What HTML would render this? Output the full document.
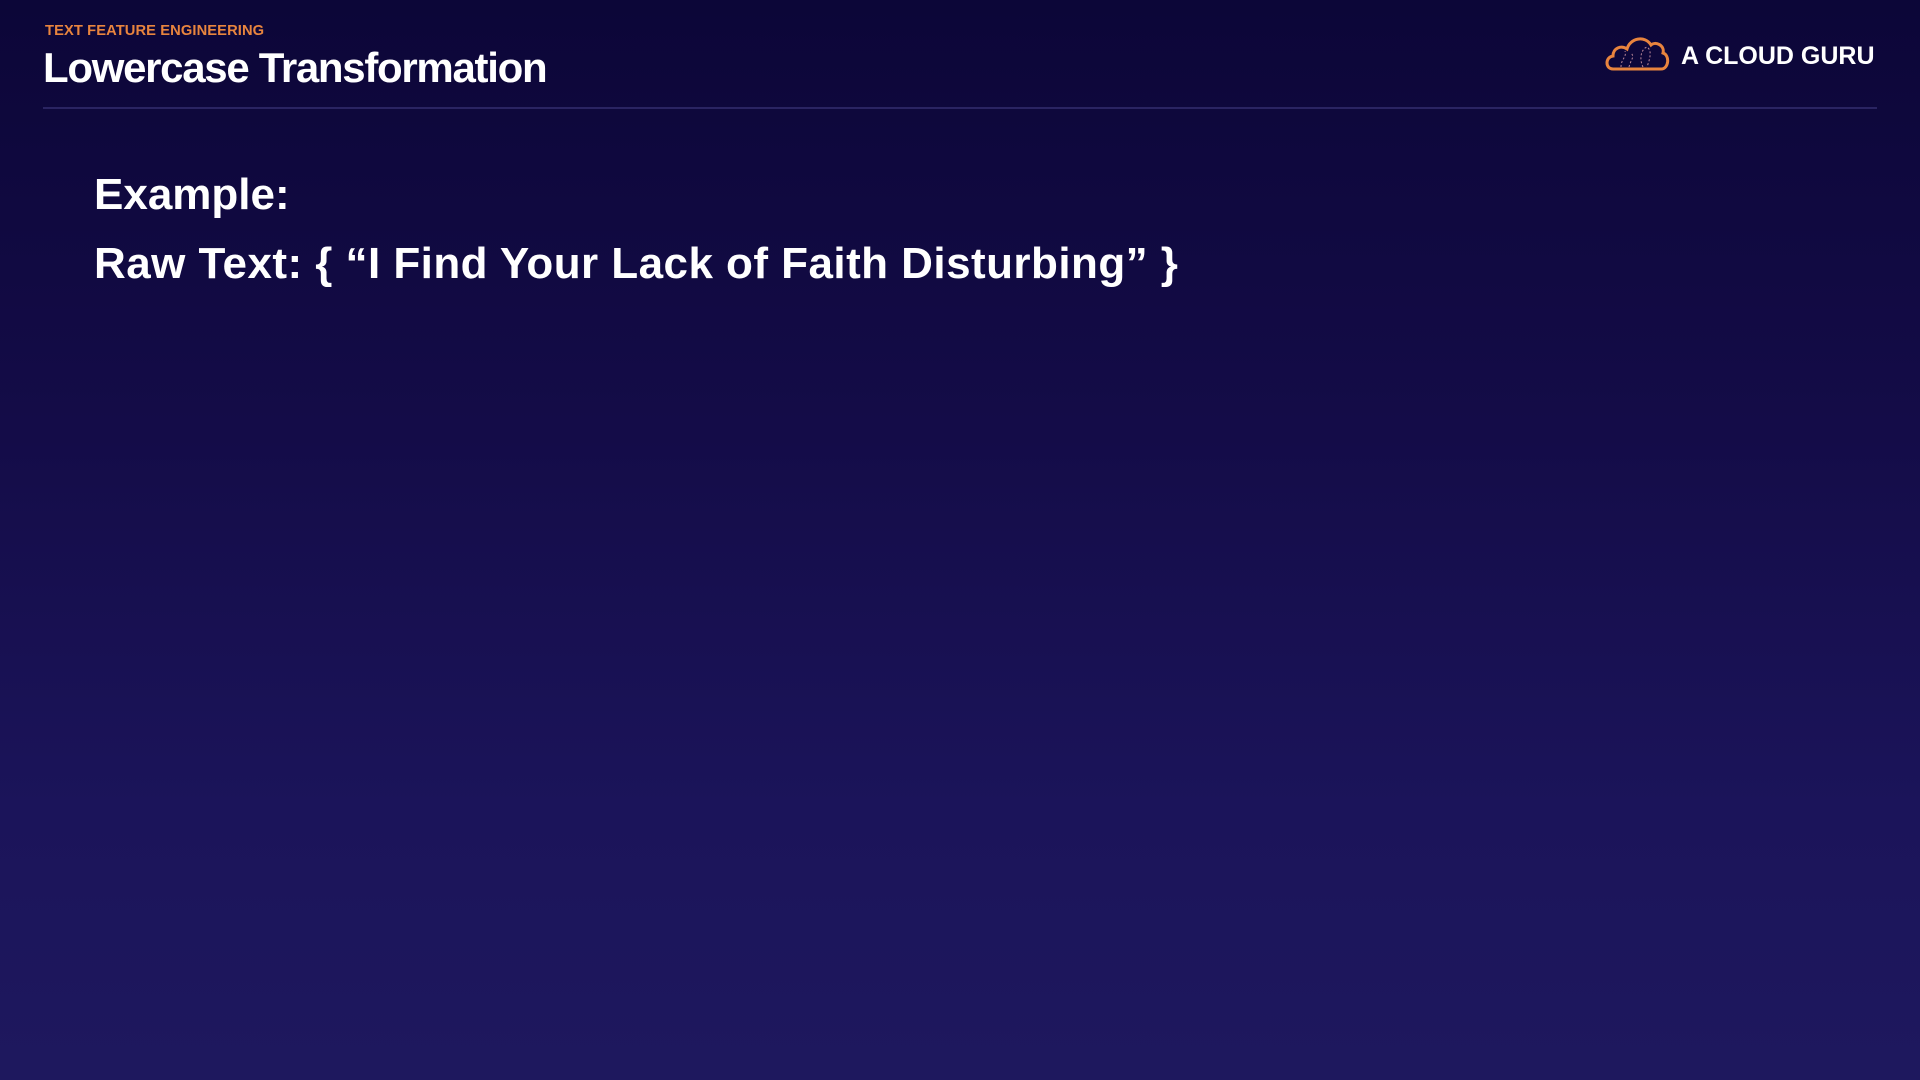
<!DOCTYPE html>
<html><head><meta charset="utf-8"><style>
html,body{margin:0;padding:0}
body{width:1920px;height:1080px;overflow:hidden;position:relative;font-family:"Liberation Sans",sans-serif;background:linear-gradient(180deg,#0c0638 0%,#140c48 40%,#1b145a 75%,#1e185e 100%);}
.sub{position:absolute;left:45px;top:23px;font-size:14.7px;font-weight:bold;color:#e8843e;letter-spacing:0.1px}
.title{position:absolute;left:43px;top:43px;font-size:42px;font-weight:bold;color:#fff;letter-spacing:-1.3px;line-height:50px}
.rule{position:absolute;left:43px;top:107px;width:1834px;height:2px;background:#2a2462}
.logo{position:absolute;left:1681px;top:40px;font-size:25px;font-weight:bold;color:#fff;line-height:32px}
.t{position:absolute;left:94px;font-size:44px;font-weight:bold;color:#fff;line-height:50px}
</style></head><body>
<div class="sub">TEXT FEATURE ENGINEERING</div>
<div class="title">Lowercase Transformation</div>
<div class="rule"></div>
<svg style="position:absolute;left:1603px;top:33px" width="68" height="40" viewBox="0 0 68 40">
<path d="M10 36 C2 36 2 24 10 23 C10 15 18 12 24 16 C27 5 42 2 48 12 C52 8 62 12 60 20 C67 22 66 36 58 36 Z" fill="none" stroke="#e8843e" stroke-width="3"/>
<path d="M18 34 C18 26 24 24 22 18 M26 34 C28 26 32 24 28 20 M40 34 C36 26 38 16 44 14 C50 18 46 28 44 34" fill="none" stroke="#b89" stroke-width="1" stroke-dasharray="2 2"/>
</svg>
<div class="logo">A CLOUD GURU</div>
<div class="t" style="top:170px">Example:</div>
<div class="t" style="top:239px;letter-spacing:0.45px">Raw Text: { “I Find Your Lack of Faith Disturbing” }</div>
</body></html>
